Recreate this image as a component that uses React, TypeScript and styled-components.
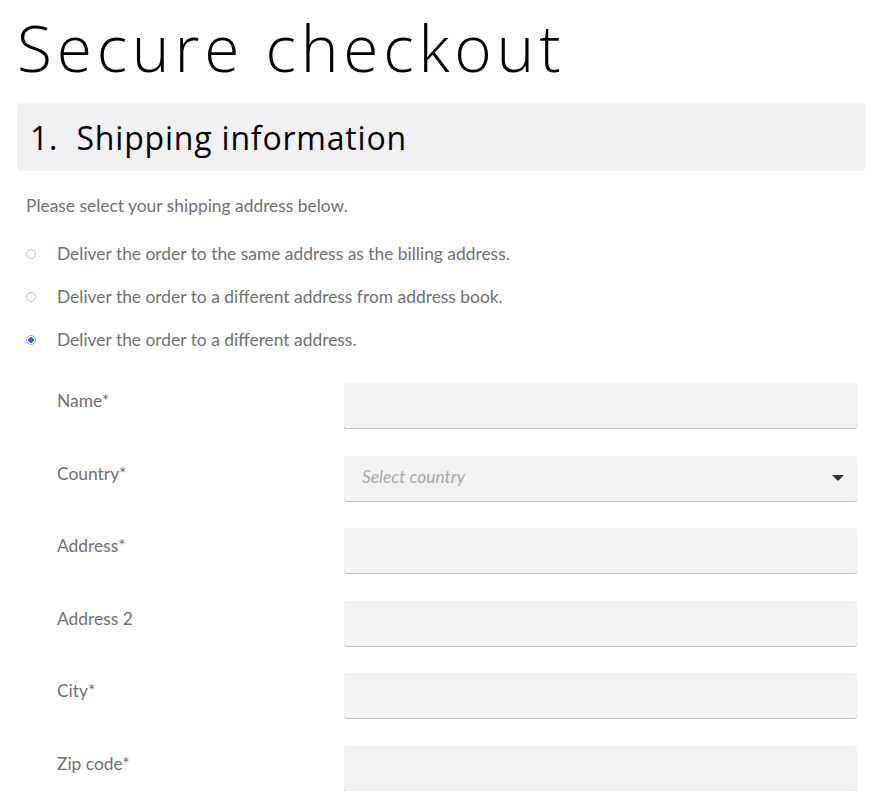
import React from 'react';
import styled, { createGlobalStyle } from 'styled-components';

const GlobalStyle = createGlobalStyle`
  body {
    margin: 0;
    background: #fff;
    font-family: 'Lato', 'Open Sans', sans-serif;
  }
`;

const Page = styled.div`
  padding: 0 14px 0 17px;
`;

const Title = styled.h1`
  margin: 0;
  padding-top: 11px;
  font-family: 'Open Sans', 'DejaVu Sans', sans-serif;
  font-weight: 300;
  font-size: 64px;
  line-height: 74px;
  color: #000;
  letter-spacing: 4.8px;
`;

const SectionHeader = styled.div`
  margin-top: 18px;
  height: 68px;
  display: flex;
  align-items: center;
  padding-left: 13px;
  background: #f1f1f3;
  border-radius: 3px;
  font-family: 'Open Sans', 'DejaVu Sans', sans-serif;
  font-weight: 400;
  font-size: 32px;
  letter-spacing: 0.8px;
  color: #000;
`;

const Intro = styled.p`
  margin: 23px 0 0 9px;
  font-size: 17.4px;
  line-height: 24px;
  color: #707070;
`;

const Options = styled.div`
  margin: 23px 0 0 9px;
  display: flex;
  flex-direction: column;
  gap: 19px;
`;

const Option = styled.label`
  display: flex;
  align-items: center;
  height: 24px;
  font-size: 17.4px;
  color: #707070;
  cursor: pointer;
`;

const Radio = styled.span<{ $checked?: boolean }>`
  box-sizing: border-box;
  width: 10px;
  height: 10px;
  border-radius: 50%;
  border: 1px solid ${p => (p.$checked ? '#8aa9d6' : '#c4c4c4')};
  background: ${p => (p.$checked ? 'radial-gradient(circle, #1a73e8 0 2.6px, #fff 3px)' : '#fff')};
  margin: 1px 21px 0 0;
  flex-shrink: 0;
`;

const Form = styled.div`
  margin: 32px 8px 0 40px;
  display: flex;
  flex-direction: column;
  gap: 27.6px;
`;

const Row = styled.div`
  display: grid;
  grid-template-columns: 287px 1fr;
  align-items: start;
`;

const Label = styled.div`
  padding-top: 6px;
  font-size: 17.4px;
  line-height: 24px;
  color: #707070;
`;

const Field = styled.div`
  position: relative;
  height: 45px;
  background: #f2f2f2;
  border-radius: 3px;
  box-shadow: 0 1px 0 #bdbdbd;
  display: flex;
  align-items: center;
  padding: 0 18px;
`;

const Placeholder = styled.span`
  flex: 1;
  margin-top: -3px;
  font-size: 17.4px;
  font-style: italic;
  color: #a8a8a8;
`;

const Caret = styled.span`
  width: 0;
  height: 0;
  border-left: 6px solid transparent;
  border-right: 6px solid transparent;
  border-top: 6px solid #333;
  margin-right: -5px;
`;

const options = [
  { text: 'Deliver the order to the same address as the billing address.', checked: false },
  { text: 'Deliver the order to a different address from address book.', checked: false },
  { text: 'Deliver the order to a different address.', checked: true },
];

const fields = ['Name*', 'Country*', 'Address*', 'Address 2', 'City*', 'Zip code*'];

export default function App() {
  return (
    <>
      <GlobalStyle />
      <Page>
        <Title>Secure checkout</Title>
        <SectionHeader>1.&nbsp;&nbsp;Shipping information</SectionHeader>
        <Intro>Please select your shipping address below.</Intro>
        <Options>
          {options.map(o => (
            <Option key={o.text}>
              <Radio $checked={o.checked} />
              {o.text}
            </Option>
          ))}
        </Options>
        <Form>
          {fields.map(f => (
            <Row key={f}>
              <Label>{f}</Label>
              {f === 'Country*' ? (
                <Field>
                  <Placeholder>Select country</Placeholder>
                  <Caret />
                </Field>
              ) : (
                <Field />
              )}
            </Row>
          ))}
        </Form>
      </Page>
    </>
  );
}
